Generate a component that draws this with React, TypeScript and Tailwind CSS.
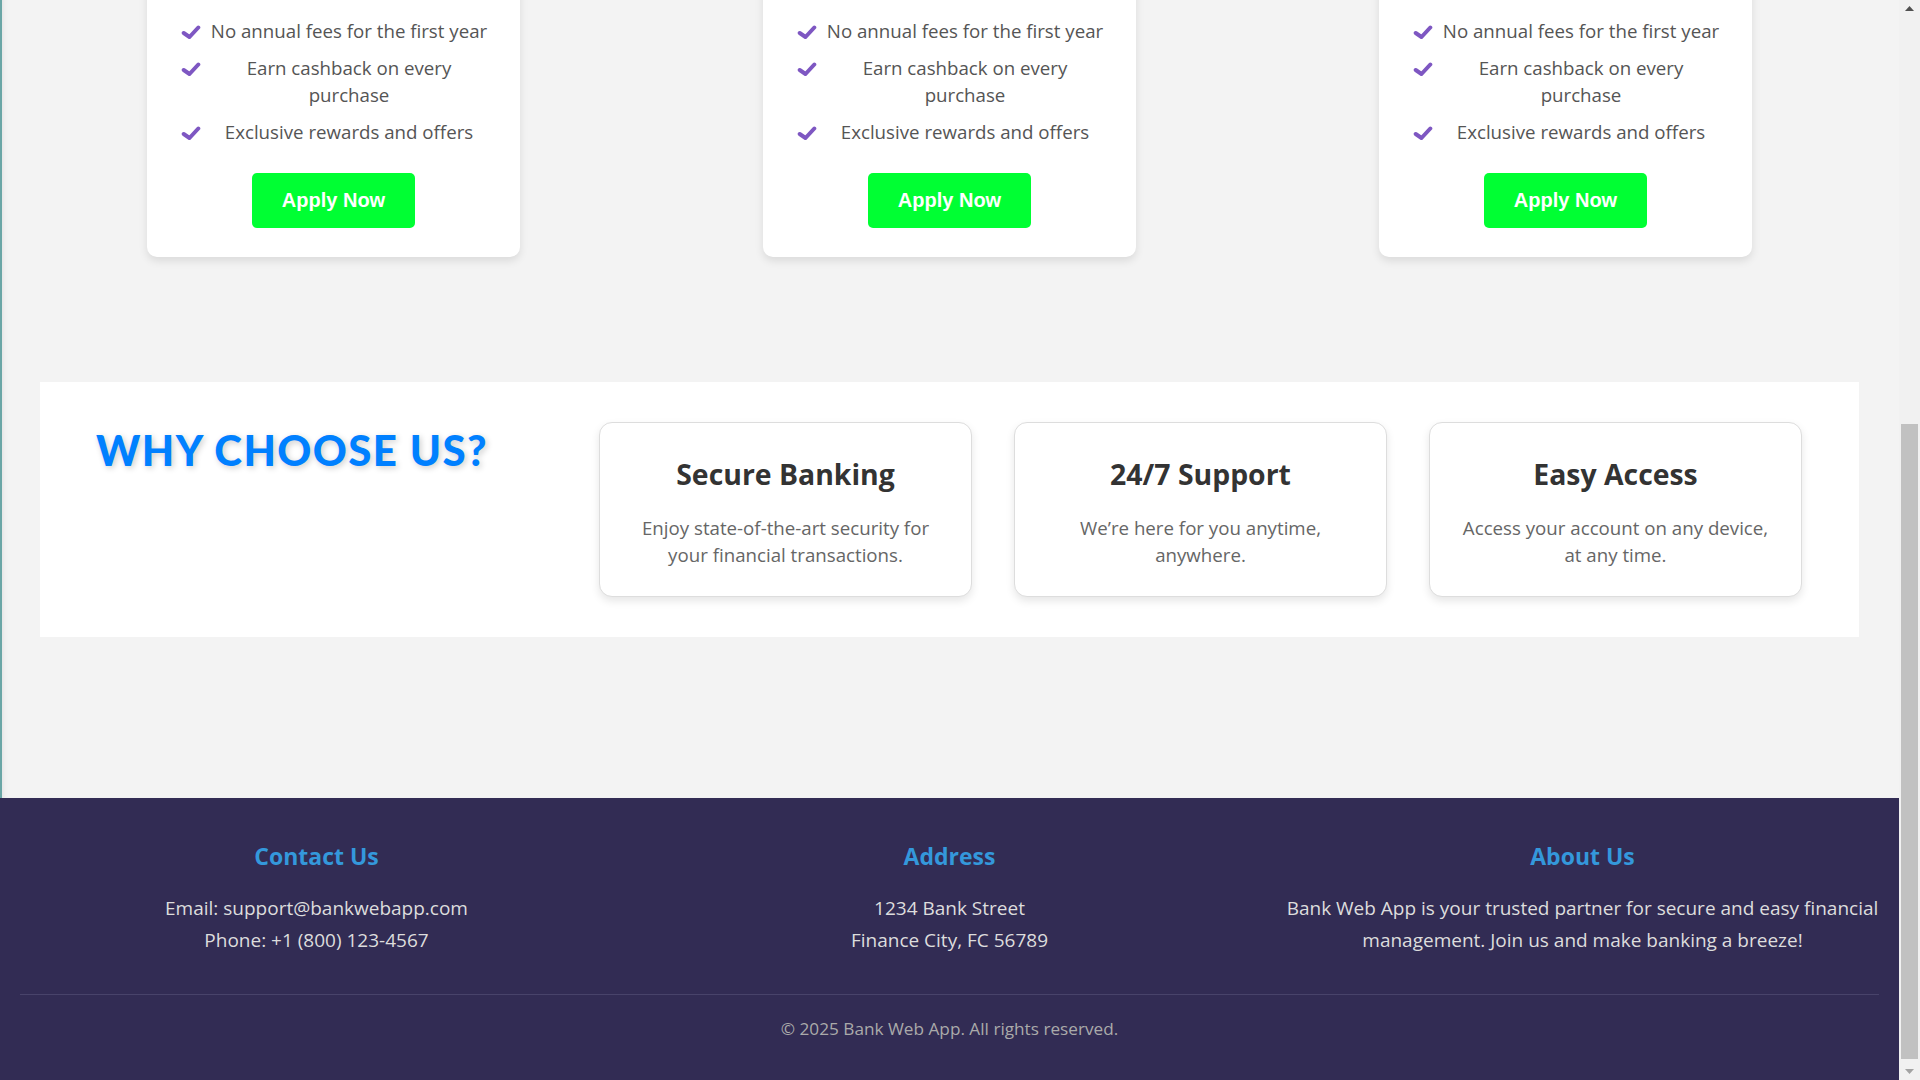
import { useLayoutEffect, useRef } from "react";

const cards = [
  { id: "classic", art: "from-[#4b6cb7] to-[#182848]" },
  { id: "gold", art: "from-[#d4a017] to-[#8a6d0b]" },
  { id: "platinum", art: "from-[#8e9eab] to-[#3f4c6b]" },
];

const perks = [
  "No annual fees for the first year",
  "Earn cashback on every purchase",
  "Exclusive rewards and offers",
];

const features = [
  { title: "Secure Banking", desc: "Enjoy state-of-the-art security for your financial transactions." },
  { title: "24/7 Support", desc: "We’re here for you anytime, anywhere." },
  { title: "Easy Access", desc: "Access your account on any device, at any time." },
];

function Check() {
  return (
    <svg width="20" height="14" viewBox="0 0 20 14" className="ml-[3px] mt-[8px] shrink-0">
      <path
        d="M2.7 8 L8.5 12 L17.3 2.5"
        fill="none"
        stroke="#7e57c2"
        strokeWidth="4"
        strokeLinecap="round"
        strokeLinejoin="round"
      />
    </svg>
  );
}

// page scrollbar, shown at the bottom of its travel
function ScrollBar() {
  return (
    <div className="flex h-screen w-[21px] shrink-0 flex-col bg-[#f1f1f1]">
      <div className="flex h-[17px] items-center justify-center">
        <svg width="9" height="5" viewBox="0 0 9 5">
          <polygon points="0,5 4.5,0 9,5" fill="#505050" />
        </svg>
      </div>
      <div className="flex flex-1 flex-col justify-end px-[2px] pb-[4px]">
        <div className="h-[635px] bg-[#c1c1c1]" />
      </div>
      <div className="flex h-[17px] items-center justify-center">
        <svg width="9" height="5" viewBox="0 0 9 5">
          <polygon points="0,0 9,0 4.5,5" fill="#a3a3a3" />
        </svg>
      </div>
    </div>
  );
}

export default function App() {
  const scroller = useRef<HTMLDivElement>(null);

  useLayoutEffect(() => {
    if (scroller.current) scroller.current.scrollTop = scroller.current.scrollHeight;
  }, []);

  return (
    <div className="flex h-screen font-['Open_Sans','Noto_Sans',sans-serif]">
      <div ref={scroller} className="h-screen flex-1 overflow-hidden bg-[#f3f3f3]">
        <div className="shadow-[inset_2px_0_0_#6aa6a6,inset_7px_0_6px_-5px_rgba(0,0,0,0.1)]">
          {/* Credit cards */}
          <section className="pt-[40px]">
            <div className="flex justify-center gap-[243px]">
              {cards.map((c) => (
                <div
                  key={c.id}
                  className="w-[373px] rounded-[10px] bg-white px-[31px] pb-[29px] pt-[30px] shadow-[0_4px_8px_rgba(0,0,0,0.1)]"
                >
                  <div className={`h-[200px] rounded-lg bg-gradient-to-br ${c.art}`} />
                  <ul className="mt-[30px] flex flex-col gap-[10px]">
                    {perks.map((p) => (
                      <li key={p} className="flex items-start text-[18.7px] leading-[27px] text-[#555555]">
                        <Check />
                        <span className="ml-[8px] flex-1 text-center">{p}</span>
                      </li>
                    ))}
                  </ul>
                  <div className="mt-[28px] flex justify-center">
                    <button className="rounded-[5px] bg-[#00ff33] px-[30px] py-[16px] font-['Liberation_Sans',Arial,sans-serif] text-[20px] font-bold leading-[23px] text-white">
                      Apply Now
                    </button>
                  </div>
                </div>
              ))}
            </div>
          </section>

          {/* Why choose us */}
          <div className="pb-[161px] pt-[125px]">
            <section className="mx-[40px] flex items-start bg-white py-[40px] pl-[56px] pr-[57px]">
              <h2 className="mt-[3px] flex-1 font-['Lato',sans-serif] text-[42px] font-black uppercase leading-[50px] tracking-[1.4px] text-[#0080ff] [text-shadow:2px_2px_6px_rgba(0,0,0,0.2)]">
                Why Choose Us?
              </h2>
              <div className="flex gap-[42px]">
                {features.map((f) => (
                  <div
                    key={f.title}
                    className="w-[373px] rounded-[13px] border border-[#dddddd] bg-white px-[27px] pb-[28px] pt-[34px] text-center shadow-[0_4px_8px_rgba(0,0,0,0.1)]"
                  >
                    <h3 className="text-[28.4px] font-bold leading-[34px] text-[#333333]">{f.title}</h3>
                    <p className="mt-[23px] text-[18.7px] leading-[27px] text-[#666666]">{f.desc}</p>
                  </div>
                ))}
              </div>
            </section>
          </div>
        </div>

        {/* Footer */}
        <footer className="bg-[#322c54] pt-[44px] text-center">
          <div className="grid grid-cols-3 pb-[38px]">
            <div className="px-[15px]">
              <h4 className="mb-[21px] text-[23px] font-bold leading-[29px] text-[#3498db]">Contact Us</h4>
              <p className="text-[19px] leading-[32px] text-[#dddddd]">Email: support@bankwebapp.com</p>
              <p className="text-[19px] leading-[32px] text-[#dddddd]">Phone: +1 (800) 123-4567</p>
            </div>
            <div className="px-[15px]">
              <h4 className="mb-[21px] text-[23px] font-bold leading-[29px] text-[#3498db]">Address</h4>
              <p className="text-[19px] leading-[32px] text-[#dddddd]">1234 Bank Street</p>
              <p className="text-[19px] leading-[32px] text-[#dddddd]">Finance City, FC 56789</p>
            </div>
            <div className="px-[15px]">
              <h4 className="mb-[21px] text-[23px] font-bold leading-[29px] text-[#3498db]">About Us</h4>
              <p className="text-[19px] leading-[32px] text-[#dddddd]">
                Bank Web App is your trusted partner for secure and easy financial management. Join us and make
                banking a breeze!
              </p>
            </div>
          </div>
          <div className="mx-[20px] border-t border-[#48436a] pb-[38px] pt-[20px]">
            <p className="text-[17.2px] leading-[27px] text-[#aaaaaa]">© 2025 Bank Web App. All rights reserved.</p>
          </div>
        </footer>
      </div>
      <ScrollBar />
    </div>
  );
}
